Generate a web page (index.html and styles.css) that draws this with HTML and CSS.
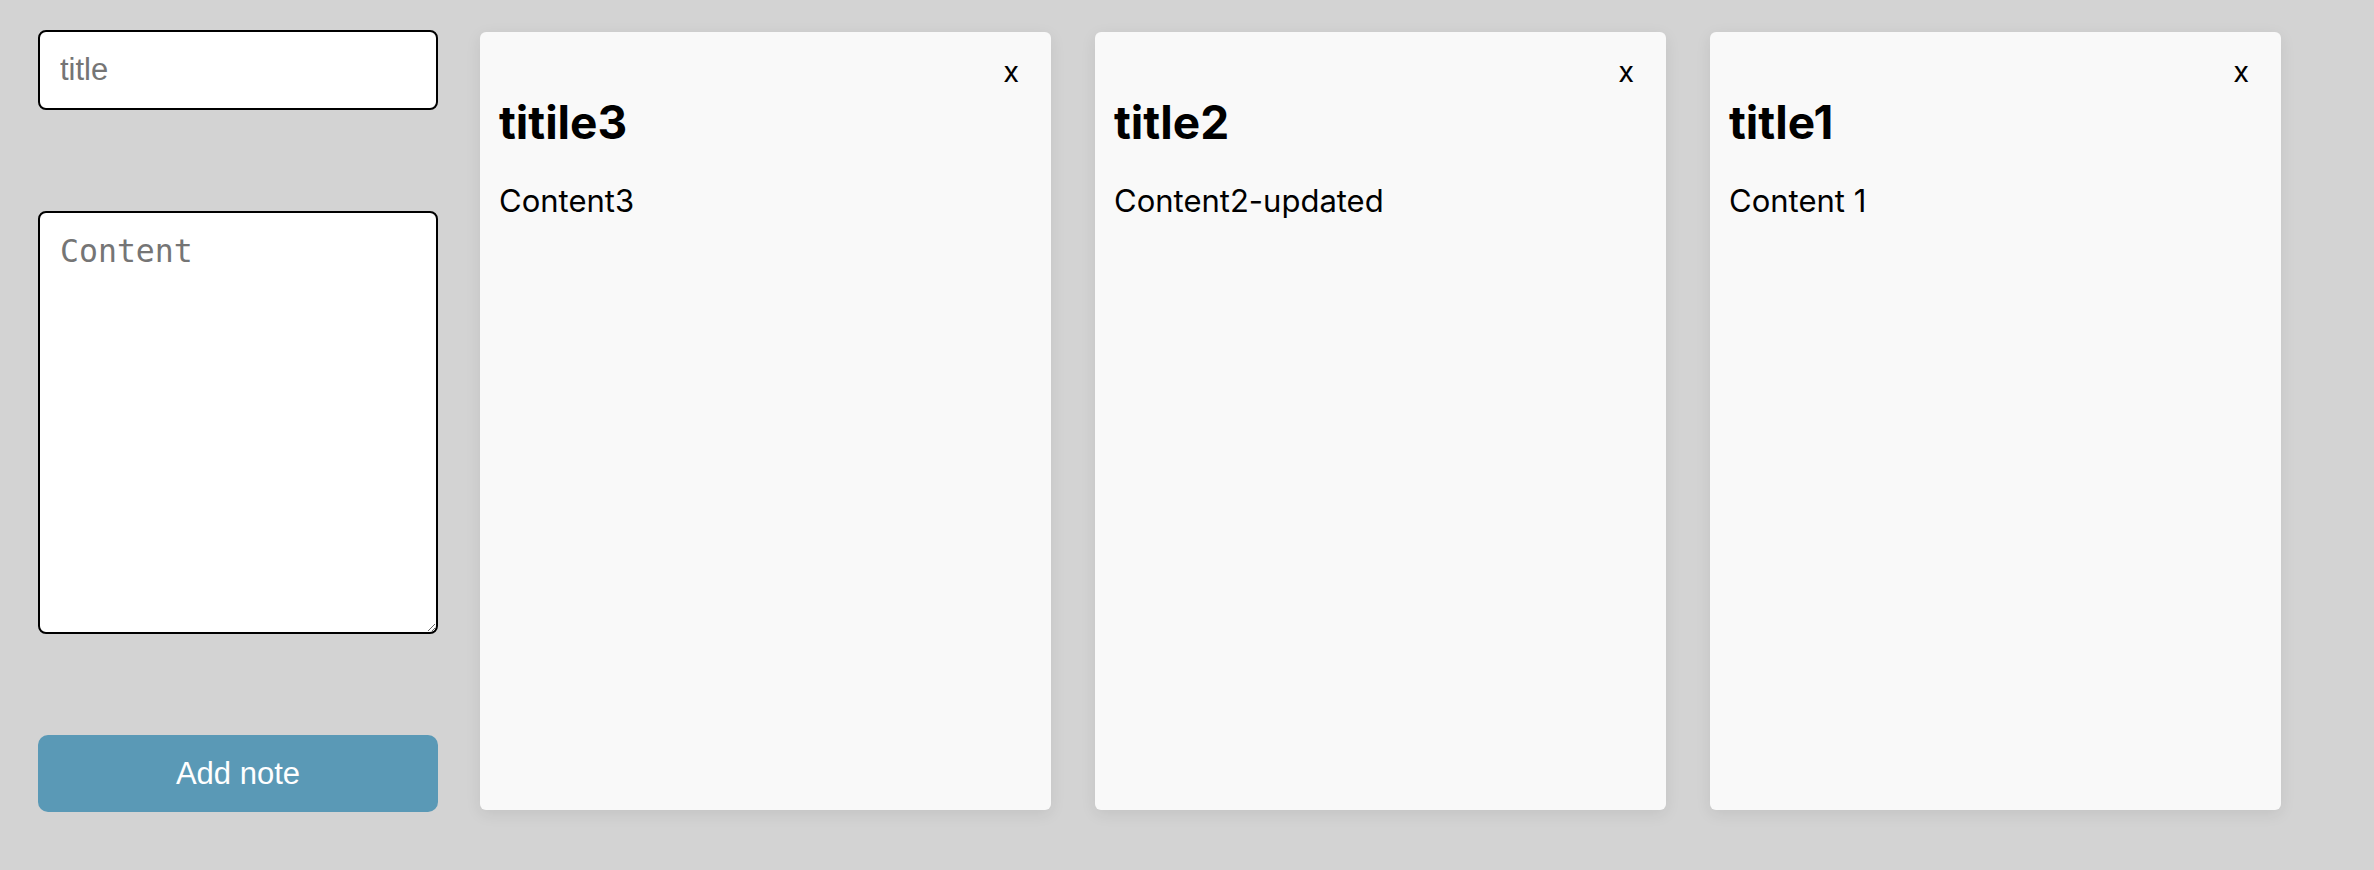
FILE: index.html
```html
<!DOCTYPE html>
<html>
<head>
<meta charset="utf-8">
<link rel="stylesheet" href="styles.css">
</head>
<body>
<div class="app">
  <form class="note-form">
    <input class="title-input" type="text" placeholder="title">
    <textarea class="content-input" placeholder="Content"></textarea>
    <button class="add-btn" type="button">Add note</button>
  </form>
  <div class="notes">
    <div class="note">
      <button class="close" type="button">x</button>
      <h2 class="note-title">titile3</h2>
      <p class="note-content">Content3</p>
    </div>
    <div class="note">
      <button class="close" type="button">x</button>
      <h2 class="note-title">title2</h2>
      <p class="note-content">Content2-updated</p>
    </div>
    <div class="note">
      <button class="close" type="button">x</button>
      <h2 class="note-title">title1</h2>
      <p class="note-content">Content 1</p>
    </div>
  </div>
</div>
</body>
</html>
```

FILE: styles.css
```css
html, body {
  margin: 0;
  padding: 0;
  background: #d3d3d3;
  width: 2374px;
  height: 870px;
  overflow: hidden;
}

.app {
  display: flex;
  align-items: stretch;
  padding: 30px 38px 0 38px;
  gap: 42px;
}

.note-form {
  display: flex;
  flex-direction: column;
  width: 400px;
  gap: 101px;
  margin: 0;
}

.title-input {
  box-sizing: border-box;
  width: 400px;
  height: 80px;
  border: 2px solid #000;
  border-radius: 8px;
  background: #fff;
  padding: 0 20px;
  font-family: "Liberation Sans", Arial, sans-serif;
  font-size: 31px;
  outline: none;
}

.content-input {
  box-sizing: border-box;
  width: 400px;
  height: 423px;
  border: 2px solid #000;
  border-radius: 8px;
  background: #fff;
  padding: 20px;
  font-family: "DejaVu Sans Mono", monospace;
  font-size: 31.5px;
  outline: none;
  resize: both;
}

.title-input::placeholder,
.content-input::placeholder {
  color: #757575;
}

.add-btn {
  width: 400px;
  height: 77px;
  border: none;
  border-radius: 10px;
  background: #5a99b6;
  color: #fff;
  font-family: "Liberation Sans", Arial, sans-serif;
  font-size: 31px;
  cursor: pointer;
  margin-top: 0;
}

.notes {
  display: flex;
  gap: 44px;
  align-items: stretch;
}

.note {
  box-sizing: border-box;
  width: 571px;
  margin: 2px 0;
  height: 778px;
  background: #f9f9f9;
  border-radius: 6px;
  box-shadow: 0 4px 16px rgba(0, 0, 0, 0.08);
  padding: 22px 32px 0 19px;
  display: flex;
  flex-direction: column;
  font-family: Inter, "Noto Sans", sans-serif;
}

.close {
  align-self: flex-end;
  background: none;
  border: none;
  padding: 0;
  margin: 0;
  font-family: Inter, "Noto Sans", sans-serif;
  font-size: 29px;
  line-height: 35px;
  color: #000;
  cursor: pointer;
}

.note-title {
  margin: 4px 0 0 0;
  font-size: 46px;
  font-weight: 700;
  line-height: 58px;
  color: #000;
}

.note-content {
  margin: 32px 0 0 0;
  font-size: 31px;
  line-height: 35px;
  color: #000;
}
```
